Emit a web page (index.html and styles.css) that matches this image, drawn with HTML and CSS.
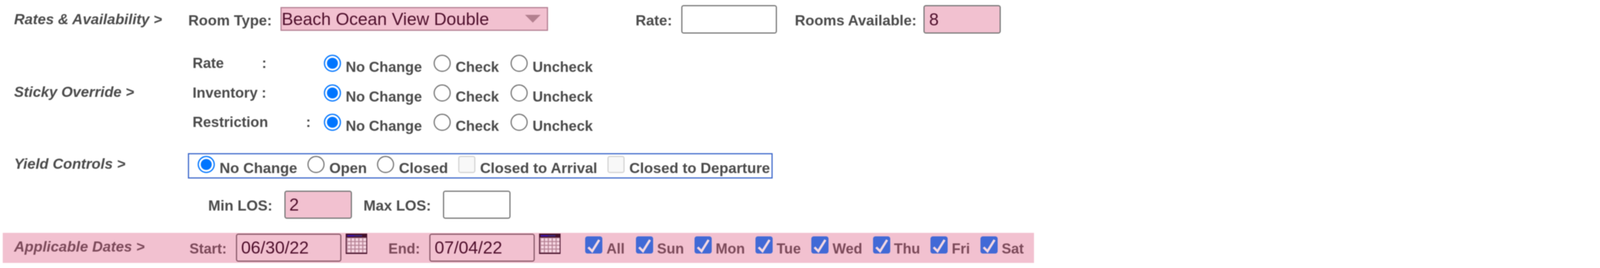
FILE: index.html
```html
<!DOCTYPE html>
<html lang="en">
<head>
  <meta charset="UTF-8">
  <title>Rates &amp; Availability</title>
  <link rel="stylesheet" href="styles.css">
</head>
<body>
  <svg class="defs" width="0" height="0">
    <defs>
      <pattern id="calCells" x="4" y="11" width="10" height="9.6" patternUnits="userSpaceOnUse">
        <rect width="7.4" height="7" x="1" y="1" fill="#f6d6e2"/>
      </pattern>
      <symbol id="cal" viewBox="0 0 55 52">
        <rect width="55" height="52" fill="#45102a"/>
        <rect x="2" y="10" width="51" height="39" fill="#b58294"/>
        <rect x="3" y="11" width="50" height="38" fill="url(#calCells)"/>
        <rect x="4" y="4" width="18" height="3" fill="#3a12c8"/>
        <rect x="22" y="4" width="20" height="3" fill="#3b2a8a"/>
      </symbol>
    </defs>
  </svg>

  <form class="page">
    <div class="section rates">
      <div class="title">Rates &amp; Availability &gt;</div>
      <div class="line">
        <label class="field-label room-label">Room Type:</label>
        <div class="select-wrap">
          <select class="select pink">
            <option>Beach Ocean View Double</option>
          </select>
        </div>
        <label class="field-label rate-label">Rate:</label>
        <input class="text-box rate-box" type="text">
        <label class="field-label rooms-label">Rooms Available:</label>
        <input class="text-box rooms-box pink" type="text" value="8">
      </div>
    </div>

    <div class="section sticky">
      <div class="title">Sticky Override &gt;</div>
      <div class="sticky-rows">
        <div class="sticky-row">
          <span class="field-name">Rate<span class="colon">:</span></span>
          <label class="opt"><input type="radio" name="s1" checked>No Change</label>
          <label class="opt"><input type="radio" name="s1">Check</label>
          <label class="opt"><input type="radio" name="s1">Uncheck</label>
        </div>
        <div class="sticky-row">
          <span class="field-name">Inventory<span class="colon short">:</span></span>
          <label class="opt"><input type="radio" name="s2" checked>No Change</label>
          <label class="opt"><input type="radio" name="s2">Check</label>
          <label class="opt"><input type="radio" name="s2">Uncheck</label>
        </div>
        <div class="sticky-row">
          <span class="field-name">Restriction<span class="colon">:</span></span>
          <label class="opt"><input type="radio" name="s3" checked>No Change</label>
          <label class="opt"><input type="radio" name="s3">Check</label>
          <label class="opt"><input type="radio" name="s3">Uncheck</label>
        </div>
      </div>
    </div>

    <div class="section yield">
      <div class="title">Yield Controls &gt;</div>
      <div class="yield-box">
        <label class="opt"><input type="radio" name="y" checked>No Change</label>
        <label class="opt"><input type="radio" name="y">Open</label>
        <label class="opt"><input type="radio" name="y">Closed</label>
        <label class="opt"><input type="checkbox" disabled>Closed to Arrival</label>
        <label class="opt"><input type="checkbox" disabled>Closed to Departure</label>
      </div>
    </div>

    <div class="los">
      <label class="field-label">Min LOS:</label>
      <input class="text-box los-box pink" type="text" value="2">
      <label class="field-label max-label">Max LOS:</label>
      <input class="text-box los-box" type="text">
    </div>

    <div class="dates-bar">
      <div class="title">Applicable Dates &gt;</div>
      <label class="field-label">Start:</label>
      <input class="text-box date-box" type="text" value="06/30/22">
      <svg class="cal-icon"><use href="#cal"/></svg>
      <label class="field-label end-label">End:</label>
      <input class="text-box date-box" type="text" value="07/04/22">
      <svg class="cal-icon"><use href="#cal"/></svg>
      <div class="days">
        <label class="day"><input type="checkbox" checked>All</label>
        <label class="day"><input type="checkbox" checked>Sun</label>
        <label class="day"><input type="checkbox" checked>Mon</label>
        <label class="day"><input type="checkbox" checked>Tue</label>
        <label class="day"><input type="checkbox" checked>Wed</label>
        <label class="day"><input type="checkbox" checked>Thu</label>
        <label class="day"><input type="checkbox" checked>Fri</label>
        <label class="day"><input type="checkbox" checked>Sat</label>
      </div>
    </div>
  </form>
</body>
</html>
```

FILE: styles.css
```css
html, body { margin: 0; padding: 0; background: #fff; }
body { font-family: "Liberation Sans", Arial, sans-serif; font-size: 37.5px; font-weight: bold; color: #4a4a4a; height: 686px; overflow: hidden; }
.defs { position: absolute; }
.page { filter: blur(0.9px); }

.section { display: flex; align-items: flex-start; padding-left: 36px; }
.title { width: 446px; flex: none; font-size: 37.5px; font-style: italic; color: #4a4a4a; white-space: nowrap; }
.line { display: flex; align-items: baseline; }
.field-label { white-space: nowrap; }

.pink { background: #f2c1d0; color: #4f0f2c; }

.text-box { box-sizing: border-box; height: 73px; margin: 0; padding: 0 10px; border: 3px solid #777; border-radius: 6px; font-family: inherit; font-size: 44.5px; font-weight: normal; outline: none; }

/* Room type row */
.rates { padding-top: 13px; height: 100px; box-sizing: border-box; }
.rates .title { padding-top: 15px; }
.room-label { margin-right: 22px; }
.select-wrap { position: relative; display: flex; align-self: flex-start; margin-top: 5px; }
.select-wrap::after { content: ""; position: absolute; right: 19px; top: 20px; border-left: 20px solid transparent; border-right: 20px solid transparent; border-top: 20px solid #b3808f; }
.select { appearance: none; box-sizing: border-box; width: 685px; height: 61px; margin: 0; padding: 0; border: 3px solid #b58295; border-radius: 0; font-family: inherit; font-size: 44.5px; font-weight: normal; }
.rate-label { margin-left: 224px; margin-right: 23px; }
.rate-box { width: 245px; }
.rooms-label { margin-left: 46px; margin-right: 17px; }
.rooms-box { width: 198px; padding-left: 12px; }

/* Sticky override */
.sticky { margin-top: 40px; }
.sticky .title { padding-top: 74px; }
.sticky-rows { margin-left: 11px; }
.sticky-row { display: flex; align-items: baseline; height: 75.5px; }
.field-name { flex: none; align-self: flex-start; box-sizing: border-box; width: 336px; padding-top: 1px; white-space: nowrap; font-size: 37px; }
.colon { margin-left: 97px; }
.colon.short { margin-left: 10px; }

.opt { display: inline-flex; align-items: baseline; margin-right: 30px; font-size: 37px; white-space: nowrap; }
.opt input, .day input { appearance: none; box-sizing: border-box; flex: none; width: 44px; height: 44px; margin: 0 12px 0 0; }
.opt input[type="radio"] { border: 3px solid #767676; border-radius: 50%; background: #fff; }
.opt input[type="radio"]:checked { border-color: #0075ff; background: #0075ff; box-shadow: inset 0 0 0 5px #fff; }
.opt input[type="checkbox"] { border: 3px solid #d4d4d4; border-radius: 6px; background: #f8f8f8; }

/* Yield controls */
.yield { margin-top: 25.5px; }
.yield .title { padding-top: 6px; }
.yield-box { display: flex; align-items: flex-start; box-sizing: border-box; width: 1497px; height: 65px; padding: 4px 0 0 22px; margin-left: -1px; border: 3px solid #3d68cb; white-space: nowrap; }
.yield-box .opt { margin-right: 26px; font-size: 37.7px; }
.yield-box .opt:last-child { margin-right: 0; }

/* LOS */
.los { display: flex; align-items: baseline; padding-left: 533px; margin-top: 31px; }
.los-box { width: 173px; height: 72px; }
.los .field-label { margin-right: 30px; }
.los .max-label { margin-left: 30px; }

/* Applicable dates */
.dates-bar { display: flex; align-items: baseline; box-sizing: border-box; width: 2640px; height: 77px; margin: 36px 0 0 7px; padding-left: 29px; background: #f2c1d0; color: #7c4a5a; font-size: 36.5px; }
.dates-bar .title { align-self: flex-start; width: 449px; padding-top: 14px; color: #7c4a5a; }
.dates-bar .field-label { margin-right: 24px; }
.date-box { width: 270px; height: 72px; margin-top: 2px; padding: 0 8px 0 10px; background: transparent; color: #4f0f2c; border-color: #8a5a6a; }
.cal-icon { flex: none; align-self: flex-start; width: 55px; height: 52px; margin: 2px 0 0 11px; }
.dates-bar .end-label { margin-left: 54px; }
.days { display: flex; align-items: baseline; margin-left: 63px; }
.day { display: inline-flex; align-items: baseline; margin-right: 27px; }
.day:first-child { margin-right: 29px; }
.day input { margin-right: 10px; border-radius: 6px; background: #4169d6 url("data:image/svg+xml,%3Csvg xmlns='http://www.w3.org/2000/svg' viewBox='0 0 44 44'%3E%3Cpath d='M8 28l10 10L36 9' fill='none' stroke='%23f5d8e2' stroke-width='6'/%3E%3C/svg%3E") center / 100% 100% no-repeat; }
```
